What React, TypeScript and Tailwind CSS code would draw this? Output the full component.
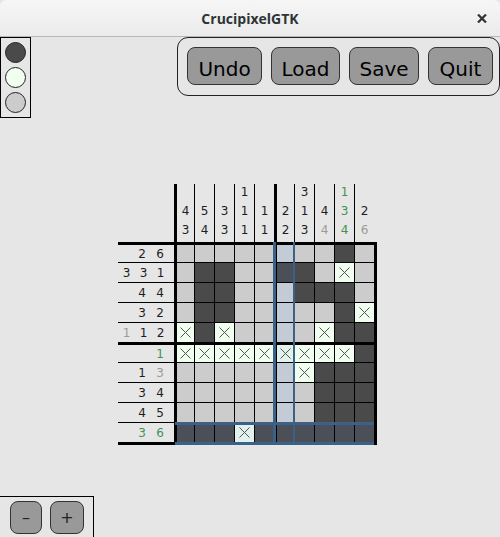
import React from "react";

type Clue = { n: number; c?: "done" | "ok" };

const rowClues: Clue[][] = [
  [{ n: 2 }, { n: 6 }],
  [{ n: 3 }, { n: 3 }, { n: 1 }],
  [{ n: 4 }, { n: 4 }],
  [{ n: 3 }, { n: 2 }],
  [{ n: 1, c: "done" }, { n: 1 }, { n: 2 }],
  [{ n: 1, c: "ok" }],
  [{ n: 1 }, { n: 3, c: "done" }],
  [{ n: 3 }, { n: 4 }],
  [{ n: 4 }, { n: 5 }],
  [{ n: 3, c: "ok" }, { n: 6, c: "ok" }],
];

const colClues: Clue[][] = [
  [{ n: 4 }, { n: 3 }],
  [{ n: 5 }, { n: 4 }],
  [{ n: 3 }, { n: 3 }],
  [{ n: 1 }, { n: 1 }, { n: 1 }],
  [{ n: 1 }, { n: 1 }],
  [{ n: 2 }, { n: 2 }],
  [{ n: 3 }, { n: 1 }, { n: 3 }],
  [{ n: 4 }, { n: 4, c: "done" }],
  [{ n: 1, c: "ok" }, { n: 3, c: "ok" }, { n: 4, c: "ok" }],
  [{ n: 2 }, { n: 6, c: "done" }],
];

const board = [
  "........#.",
  ".##..##.x.",
  ".##...###.",
  ".##.....#x",
  "x#x....x##",
  "xxxxxxxxx#",
  "......x###",
  ".......###",
  ".......###",
  "###x######",
];

const HL_ROW = 9;
const HL_COL = 5;

function clueColor(c?: "done" | "ok") {
  if (c === "done") return "text-[#a09a94]";
  if (c === "ok") return "text-[#449155]";
  return "text-[#1d1d24]";
}

function Cross() {
  return (
    <svg width="11" height="11" viewBox="0 0 11 11">
      <path d="M0.5 0.5 L10.5 10.5 M10.5 0.5 L0.5 10.5" stroke="#555" strokeWidth="1" />
    </svg>
  );
}

function Cell({ v, r, c }: { v: string; r: number; c: number }) {
  const hl = r === HL_ROW || c === HL_COL;
  const w = c === 0 || c === 5 ? "w-[17px]" : "w-[19px]";
  const h = r === 0 || r === 5 ? "h-[17px]" : "h-[19px]";
  const ml = c === 5 ? "ml-[2px]" : "";
  let bg = hl ? "bg-[#c3cbd6]" : "bg-[#cccccc]";
  if (v === "#") bg = hl ? "bg-[#4b5058]" : "bg-[#4a4a4a]";
  if (v === "x") bg = hl ? "bg-[#e1f1ec]" : "bg-[#f0fff0]";
  return (
    <div className={`${w} ${h} ${ml} ${bg} flex items-center justify-center`}>
      {v === "x" && <Cross />}
    </div>
  );
}

export default function App() {
  return (
    <div className="w-[500px] h-[537px] flex flex-col bg-[#e6e6e6] overflow-hidden" style={{ fontFamily: "'DejaVu Sans', sans-serif" }}>
      {/* title bar */}
      <div className="h-[37px] relative flex items-center justify-center bg-gradient-to-b from-[#f6f6f6] to-[#ebebeb] border-b border-[#b8b8b8] rounded-t-[6px]">
        <span className="text-[14px] font-bold text-[#2e3436]" style={{ fontFamily: "'Open Sans', sans-serif" }}>
          CrucipixelGTK
        </span>
        <svg className="absolute right-[13px] top-[14px]" width="10" height="9" viewBox="0 0 10 9">
          <path d="M1 0.5 L9 8.5 M9 0.5 L1 8.5" stroke="#2e3436" strokeWidth="2.2" />
        </svg>
      </div>

      <div className="flex-1 flex flex-col">
        <div className="flex justify-between items-start">
          <div className="border border-black p-[4px] flex flex-col gap-[4px]">
            <div className="w-[21px] h-[21px] rounded-full border border-[#222] bg-[#4a4a4a]" />
            <div className="w-[21px] h-[21px] rounded-full border border-[#222] bg-[#f0fff0]" />
            <div className="w-[21px] h-[21px] rounded-full border border-[#222] bg-[#cccccc]" />
          </div>
          <div className="w-[323px] border border-[#222] rounded-[11px] pl-[9px] pt-[9px] pb-[10px] flex gap-[9px] text-[20px] text-black">
            <button className="w-[75px] h-[38px] pt-[5px] rounded-[8px] border border-[#333] bg-[#999999]">Undo</button>
            <button className="w-[69px] h-[38px] pt-[5px] rounded-[8px] border border-[#333] bg-[#999999]">Load</button>
            <button className="w-[70px] h-[38px] pt-[5px] rounded-[8px] border border-[#333] bg-[#999999]">Save</button>
            <button className="w-[65px] h-[38px] pt-[5px] rounded-[8px] border border-[#333] bg-[#999999]">Quit</button>
          </div>
        </div>

        {/* board */}
        <div className="ml-[118px] mt-[66px] flex flex-col text-[12px]">
          <div className="flex">
            <div className="w-[56px]" />
            <div className="flex h-[58px]">
              {colClues.map((col, i) => (
                <div
                  key={i}
                  className={`w-[20px] border-black ${i === 0 || i === 5 ? "border-l-[3px]" : "border-l"} flex flex-col justify-end items-center pb-[2px] leading-[19px]`}
                >
                  {col.map((cl, j) => (
                    <span key={j} className={clueColor(cl.c)}>
                      {cl.n}
                    </span>
                  ))}
                </div>
              ))}
            </div>
          </div>
          <div className="flex">
            <div className="w-[56px] bg-black py-[3px] flex flex-col gap-px">
              {rowClues.map((row, r) => (
                <div
                  key={r}
                  className={`${r === 0 || r === 5 ? "h-[17px]" : "h-[19px]"} ${r === 5 ? "mt-[2px]" : ""} bg-[#e6e6e6] flex justify-end items-center pr-[5px]`}
                >
                  {row.map((cl, j) => (
                    <span key={j} className={`w-[18px] text-center ${clueColor(cl.c)}`}>
                      {cl.n}
                    </span>
                  ))}
                </div>
              ))}
            </div>
            <div className="relative bg-black p-[3px] flex flex-col gap-px">
              {board.map((row, r) => (
                <div key={r} className={`flex gap-px ${r === 5 ? "mt-[2px]" : ""}`}>
                  {row.split("").map((v, c) => (
                    <Cell key={c} v={v} r={r} c={c} />
                  ))}
                </div>
              ))}
              <div className="absolute left-[99px] top-0 bottom-0 w-[22px] border-l-[3px] border-r-[2px] border-[#3b6286]" />
              <div className="absolute left-[1px] right-[3px] top-[180px] h-[23px] border-y-[3px] border-[#3b6286]" />
            </div>
          </div>
        </div>

        {/* zoom controls */}
        <div className="mt-auto w-[94px] h-[41px] border-t border-r border-black pl-[10px] pt-[4px] flex gap-[8px] text-[16px] text-[#222]">
          <button className="w-[32px] h-[33px] rounded-[8px] border border-[#333] bg-[#999999]">–</button>
          <button className="w-[34px] h-[33px] rounded-[8px] border border-[#333] bg-[#999999]">+</button>
        </div>
      </div>
    </div>
  );
}
